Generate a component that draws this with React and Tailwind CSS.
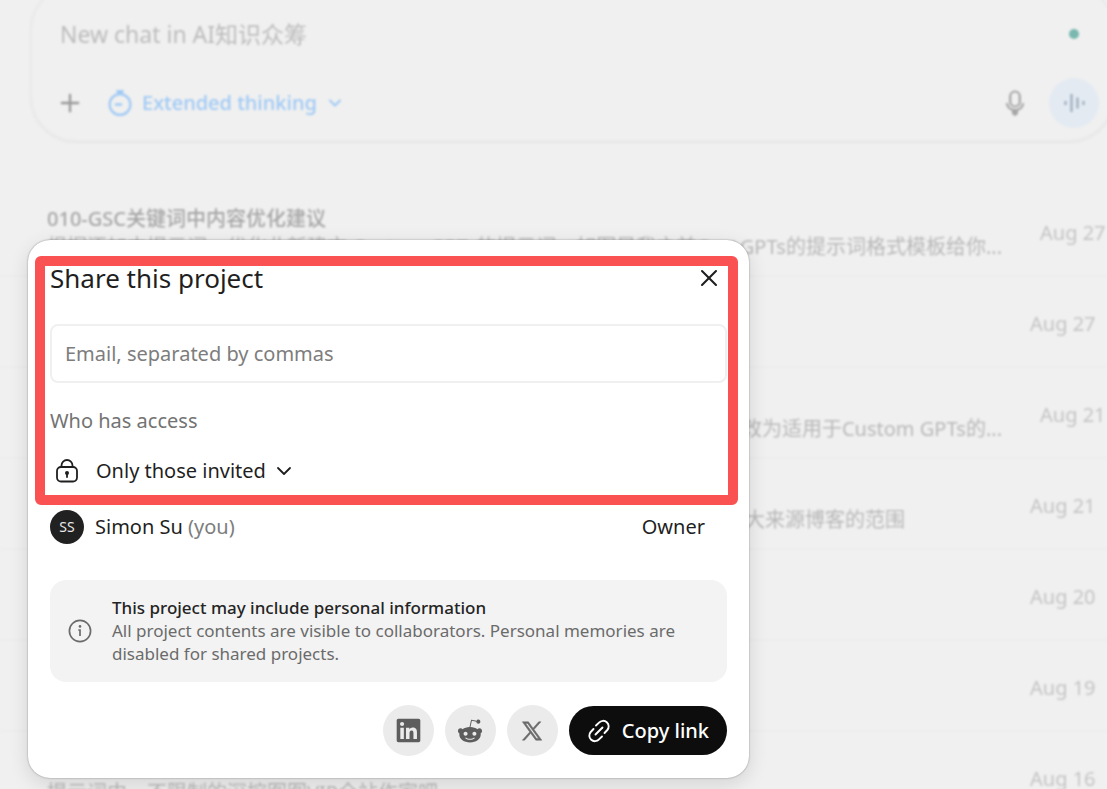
import { ChevronDown, Plus, X } from "lucide-react";
import { FaLinkedin, FaRedditAlien } from "react-icons/fa";

const rows = [
  {
    title: "010-GSC关键词中内容优化建议",
    start: "根据添加中提示词，优化此新建文 Custom GPTs的提示词，如图是我之前Custom",
    end: "GPTs的提示词格式模板给你...",
    date: "Aug 27",
    wide: true,
  },
  { date: "Aug 27" },
  { end: "改为适用于Custom GPTs的...", date: "Aug 21", wide: true },
  { end: "大来源博客的范围", date: "Aug 21", short: true },
  { date: "Aug 20" },
  { date: "Aug 19" },
  { start: "提示词中，不限制的深挖图图VIP全站作家吧", date: "Aug 16" },
];

function StopwatchIcon() {
  return (
    <svg viewBox="0 0 24 26" className="h-[26px] w-6" fill="none" stroke="currentColor" strokeWidth="2.2">
      <circle cx="12" cy="14.5" r="10.4" />
      <path d="M8.5 1.5h7M12 2v3" strokeWidth="3" />
      <path d="M8 14.5h5" strokeWidth="2.6" strokeLinecap="round" />
    </svg>
  );
}

function MicIcon() {
  return (
    <svg viewBox="0 0 20 26" className="h-[26px] w-5" fill="none" stroke="currentColor" strokeWidth="2.2">
      <rect x="5.2" y="1.5" width="9.6" height="15" rx="4.8" />
      <path d="M2 14c1 4 4 6 8 6s7-2 8-6M10 20v5" strokeLinecap="round" />
      <path d="M7 22.5h6" strokeWidth="4" />
    </svg>
  );
}

function VoiceIcon() {
  return (
    <svg viewBox="0 0 24 20" className="h-5 w-6" stroke="currentColor" strokeWidth="2.6" strokeLinecap="round">
      <path d="M3.5 9v2M9.5 2v16M15.500 5.500v9M21.500 9v2" />
    </svg>
  );
}

function LockIcon() {
  return (
    <svg viewBox="0 0 24 26" className="h-[26px] w-6" fill="none" stroke="currentColor" strokeWidth="1.8">
      <rect x="2" y="9" width="20" height="14.5" rx="4" />
      <path d="M6.5 9V7.5a5.5 5.5 0 0 1 11 0V9" />
      <circle cx="12" cy="15" r="2" fill="currentColor" stroke="none" />
      <path d="M12 15v4" strokeLinecap="round" />
    </svg>
  );
}

function InfoIcon() {
  return (
    <svg viewBox="0 0 24 24" className="size-6 shrink-0" fill="none" stroke="currentColor" strokeWidth="1.7">
      <circle cx="12" cy="12" r="10.6" />
      <circle cx="12" cy="7.4" r="1.3" fill="currentColor" stroke="none" />
      <path d="M10.3 11H12v6" />
    </svg>
  );
}

function LinkIcon() {
  return (
    <svg viewBox="0 0 24 24" className="size-6" fill="none" stroke="currentColor" strokeWidth="1.9" strokeLinecap="round">
      <path d="M9 6.5l3-2.8a5.4 5.400 0 0 1 8.300 7.300L17.500 14" />
      <path d="M15 17.500l-3 2.800a5.400 5.400 0 0 1-8.300-7.300L6.500 10" />
      <path d="M8.500 15.500l7-7" />
    </svg>
  );
}

function XLogo() {
  return (
    <svg viewBox="0 0 24 24" className="size-[22px]" fill="currentColor" stroke="currentColor" strokeWidth="0.6">
      <path
        fillRule="evenodd"
        d="M1.500 2h6.600l5 6.900L19.300 2h2.400l-7.500 8.400L22.700 22h-6.600l-5.500-7.500L3.900 22H1.500l8-9zM5 3.700l12 16.500h2.200L7.200 3.700z"
      />
    </svg>
  );
}

function Composer() {
  return (
    <div className="-mt-4 -mr-2 ml-[30px] flex flex-col gap-8 rounded-[46px] border-2 border-[#e9e9e9] pt-7 pr-[14px] pb-3 pl-6 shadow-xs">
      <div className="flex items-center justify-between pr-5 pl-1">
        <label htmlFor="prompt" className="sr-only">New chat</label>
        <input
          id="prompt"
          placeholder="New chat in AI知识众筹"
          className="h-10 flex-1 bg-transparent text-[23px] outline-none placeholder:text-[#bcbcbc]"
        />
        <span className="size-[10px] rounded-full bg-[#78b8ae]" />
      </div>
      <div className="-mt-2 flex items-center">
        <button aria-label="Add" className="text-[#999999]">
          <Plus className="size-7" strokeWidth={2} />
        </button>
        <button className="ml-6 flex items-center gap-2 text-xl font-medium text-[#9fc9f5]">
          <StopwatchIcon />
          <span className="pl-[2px]">Extended thinking</span>
          <ChevronDown className="size-5" strokeWidth={2.4} />
        </button>
        <button aria-label="Dictate" className="ml-auto text-[#a5a5a5]">
          <MicIcon />
        </button>
        <button aria-label="Voice" className="ml-6 flex size-[50px] items-center justify-center rounded-full bg-[#e3eaf2] text-[#a5b4c2]">
          <VoiceIcon />
        </button>
      </div>
    </div>
  );
}

function ChatRow({ title, start, end, date, wide, short }) {
  return (
    <li className="flex h-[91px] items-center border-b-2 border-[#ededed] pl-[47px]">
      <div className={short ? "mr-[97px] min-w-0 flex-1 pt-1" : "min-w-0 flex-1 pt-1"}>
        <p className="h-7 truncate text-xl leading-7 font-medium text-[#a6a6a6]">{title}</p>
        <p className="flex h-7 justify-between gap-1 text-xl leading-7 whitespace-nowrap text-[#b8b8b8]">
          <span className="w-0 flex-1 overflow-hidden">{start}</span>
          <span>{end}</span>
        </p>
      </div>
      <time className={wide ? "ml-[38px] w-[67px] pt-1 text-xl text-[#c4c4c4]" : "mr-[10px] ml-[28px] w-[67px] pt-1 text-xl text-[#c4c4c4]"}>
        {date}
      </time>
    </li>
  );
}

function ShareDialog() {
  return (
    <section
      role="dialog"
      aria-labelledby="share-title"
      className="absolute top-[240px] left-7 w-[721px] rounded-[22px] bg-white px-[22px] pt-5 pb-[22px] text-[#1f1f1f] shadow-[0_6px_20px_rgba(0,0,0,0.12),0_0_2px_rgba(0,0,0,0.4)]"
    >
      <div className="pointer-events-none absolute top-4 right-[11px] left-[7px] h-[249px] rounded-md border-10 border-[#fa5252]" />
      <div className="flex items-center justify-between pr-1">
        <h2 id="share-title" className="text-[26px] leading-9">Share this project</h2>
        <button aria-label="Close">
          <X className="size-7" strokeWidth={1.8} />
        </button>
      </div>
      <input
        aria-label="Email"
        placeholder="Email, separated by commas"
        className="mt-7 block h-[59px] w-full rounded-lg border-2 border-[#f0f0f0] px-[13px] text-xl outline-none placeholder:text-[#7d7d7d]"
      />
      <h3 className="mt-6 text-xl leading-7 text-[#737373]">Who has access</h3>
      <button className="mt-[22px] flex h-7 items-center text-xl">
        <span className="mr-[17px] ml-[5px]"><LockIcon /></span>
        Only those invited
        <ChevronDown className="ml-[6px] size-6" strokeWidth={1.8} />
      </button>
      <div className="mt-[25px] flex items-center">
        <span className="flex size-[34px] items-center justify-center rounded-full bg-[#212121] text-sm text-[#e8e8e8]">SS</span>
        <p className="ml-[11px] text-xl">
          Simon Su <span className="text-[#7d7d7d]">(you)</span>
        </p>
        <span className="mr-[22px] ml-auto text-xl">Owner</span>
      </div>
      <div className="mt-9 flex h-[102px] items-center gap-5 rounded-2xl bg-[#f3f3f3] px-[18px] text-[#6b6b6b]">
        <InfoIcon />
        <div className="pb-[2px] text-[17px] leading-[23px]">
          <p className="font-medium text-[#242424]">This project may include personal information</p>
          <p>All project contents are visible to collaborators. Personal memories are disabled for shared projects.</p>
        </div>
      </div>
      <div className="mt-[23px] flex items-center justify-end gap-[11px]">
        <button aria-label="LinkedIn" className="flex size-[51px] items-center justify-center rounded-full bg-[#ebebeb] text-[#5d5d5d]">
          <FaLinkedin className="size-[27px]" />
        </button>
        <button aria-label="Reddit" className="flex size-[51px] items-center justify-center rounded-full bg-[#ebebeb] text-[#5d5d5d]">
          <FaRedditAlien className="size-[26px]" />
        </button>
        <button aria-label="X" className="flex size-[51px] items-center justify-center rounded-full bg-[#ebebeb] text-[#6b6b6b]">
          <XLogo />
        </button>
        <button className="flex h-[49px] items-center gap-[11px] rounded-full bg-[#0d0d0d] px-[18px] text-xl font-medium text-white">
          <LinkIcon />
          Copy link
        </button>
      </div>
    </section>
  );
}

export default function App() {
  return (
    <main className="relative h-screen overflow-hidden bg-[#f0f0f0] font-['Noto_Sans','Noto_Sans_CJK_SC',sans-serif]">
      <div className="blur-[1px]">
        <Composer />
        <ul className="mt-11">
          {rows.map((row, i) => (
            <ChatRow key={i} {...row} />
          ))}
        </ul>
      </div>
      <ShareDialog />
    </main>
  );
}
